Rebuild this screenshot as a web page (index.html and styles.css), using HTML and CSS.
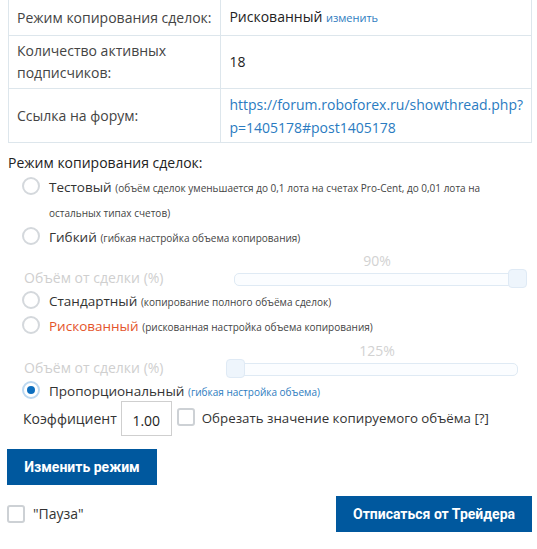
FILE: index.html
```html
<!DOCTYPE html>
<html lang="ru">
<head>
<meta charset="utf-8">
<link rel="stylesheet" href="styles.css">
</head>
<body>
<div class="page">
  <table class="info">
    <tr class="r1">
      <td class="lbl">Режим копирования сделок:</td>
      <td class="val"><span class="mode">Рискованный</span> <a class="change" href="#">изменить</a></td>
    </tr>
    <tr class="r2">
      <td class="lbl">Количество активных подписчиков:</td>
      <td class="val">18</td>
    </tr>
    <tr class="r3">
      <td class="lbl">Ссылка на форум:</td>
      <td class="val"><a class="link" href="#">https://forum.roboforex.ru/showthread.php?p=1405178#post1405178</a></td>
    </tr>
  </table>

  <div class="heading">Режим копирования сделок:</div>

  <div class="modes">
    <label class="opt">
      <span class="radio"></span>
      <span class="otext"><span class="name">Тестовый</span> <span class="desc">(объём сделок уменьшается до 0,1 лота на счетах Pro-Cent, до 0,01 лота на остальных типах счетов)</span></span>
    </label>
    <label class="opt">
      <span class="radio"></span>
      <span class="otext"><span class="name">Гибкий</span> <span class="desc">(гибкая настройка объема копирования)</span></span>
    </label>
    <div class="slider-row first">
      <div class="slabel">Объём от сделки (%)</div>
      <div class="scol">
        <div class="svalue">90%</div>
        <div class="strack-wrap"><div class="strack"><span class="shandle" style="left:100%"></span></div></div>
      </div>
    </div>
    <label class="opt">
      <span class="radio"></span>
      <span class="otext"><span class="name">Стандартный</span> <span class="desc">(копирование полного объёма сделок)</span></span>
    </label>
    <label class="opt">
      <span class="radio"></span>
      <span class="otext"><span class="name risky">Рискованный</span> <span class="desc">(рискованная настройка объема копирования)</span></span>
    </label>
    <div class="slider-row second">
      <div class="slabel">Объём от сделки (%)</div>
      <div class="scol">
        <div class="svalue">125%</div>
        <div class="strack-wrap"><div class="strack"><span class="shandle" style="left:0%"></span></div></div>
      </div>
    </div>
    <label class="opt">
      <span class="radio checked"></span>
      <span class="otext"><span class="name">Пропорциональный</span> <span class="desc blue">(гибкая настройка объема)</span></span>
    </label>
  </div>

  <div class="coef-row">
    <span class="coef-label">Коэффициент</span>
    <span class="coef-input">1.00</span>
    <span class="checkbox"></span>
    <span class="cut">Обрезать значение копируемого объёма [?]</span>
  </div>

  <button class="btn btn-change">Изменить режим</button>

  <div class="bottom-row">
    <label class="pause"><span class="checkbox"></span><span>"Пауза"</span></label>
    <button class="btn btn-unsub">Отписаться от Трейдера</button>
  </div>
</div>
</body>
</html>
```

FILE: styles.css
```css
* { box-sizing: border-box; }
html, body { margin: 0; padding: 0; background: #fff; }
body {
  font-family: "Open Sans", "Noto Sans", sans-serif;
  font-size: 14px;
  color: #333;
}
.page {
  width: 537px;
  padding: 0 5px 0 7px;
}
.info {
  border-collapse: collapse;
  width: 524px;
  margin-left: 1px;
}
.info td {
  border: 1px solid #dde6ec;
  border-top: none;
  padding: 0 8px;
  line-height: 22px;
  vertical-align: middle;
}
.info td.lbl { width: 216px; color: #444; }
.info td.val { color: #222; }
.info tr.r1 td { height: 35px; padding-top: 1px; }
.info tr.r2 td { height: 53px; padding-top: 1px; }
.info tr.r3 td { height: 54px; line-height: 23px; padding-top: 1px; }
.mode { color: #222; }
.change { color: #2e7cc0; font-size: 11px; text-decoration: none; }
.link { color: #2a7bc1; text-decoration: none; }

.heading {
  margin: 10px 0 0 1px;
  line-height: 20px;
  color: #222;
}
.modes { margin-top: 1px; }
.opt {
  display: flex;
  align-items: flex-start;
  padding-left: 15px;
}
.radio {
  flex: none;
  width: 18px;
  height: 18px;
  border: 2px solid #d4d8dc;
  border-radius: 50%;
  margin-top: 3px;
  margin-right: 9px;
  position: relative;
  background: #fff;
}
.radio.checked { border-color: #bcd8f0; }
.radio.checked::after {
  content: "";
  position: absolute;
  left: 3px; top: 3px;
  width: 8px; height: 8px;
  border-radius: 50%;
  background: #0d6fbf;
}
.otext { line-height: 25px; color: #333; }
.name { font-size: 13.5px; line-height: 18px; }
.name.risky { color: #e4542b; }
.desc { font-size: 10px; color: #444; line-height: 12px; }
.desc.blue { color: #2e7cc0; }

.slider-row {
  display: flex;
  align-items: flex-end;
  padding-top: 4px;
}
.slider-row.second { padding-top: 5px; padding-bottom: 0; }
.slabel {
  width: 219px;
  padding-left: 17px;
  color: #cfcfcf;
  line-height: 19px;
  margin-bottom: 1px;
}
.scol { width: 302px; }
.svalue {
  text-align: center;
  color: #d2d2d2;
  line-height: 16px;
  font-size: 14px;
}
.strack-wrap {
  height: 19px;
  padding: 4px 10px 0 8px;
}
.strack {
  position: relative;
  height: 13px;
  border: 1px solid #dfeaf4;
  border-radius: 5px;
  background: #fbfdff;
}
.shandle {
  position: absolute;
  top: -5px;
  width: 19px;
  height: 19px;
  margin-left: -9px;
  border: 1px solid #dfeaf5;
  border-radius: 4px;
  background: #eef5fc;
}

.coef-row {
  display: flex;
  align-items: center;
  margin-top: -2px;
  padding-left: 16px;
}
.coef-label { color: #333; margin-right: 4px; }
.coef-input {
  width: 51px;
  height: 35px;
  border: 1px solid #cfcfcf;
  text-align: center;
  line-height: 37px;
  color: #222;
}
.checkbox {
  flex: none;
  width: 18px;
  height: 18px;
  border: 2px solid #cdd1d5;
  border-radius: 3px;
  background: #fff;
}
.coef-row .checkbox { margin: 0 7px 0 5px; position: relative; top: -1px; }
.cut { color: #333; font-size: 13.3px; }

.btn {
  border: none;
  background: #00589e;
  color: #fff;
  font-family: Roboto, "Liberation Sans", sans-serif;
  font-weight: 700;
  font-size: 14px;
  height: 36px;
  padding: 0;
  cursor: pointer;
}
.btn-change { display: block; width: 150px; margin-top: 13px; }
.bottom-row {
  display: flex;
  justify-content: space-between;
  align-items: center;
  margin-top: 11px;
}
.pause { display: flex; align-items: center; color: #333; }
.pause .checkbox { margin-right: 8px; }
.btn-unsub { width: 196px; }
```
